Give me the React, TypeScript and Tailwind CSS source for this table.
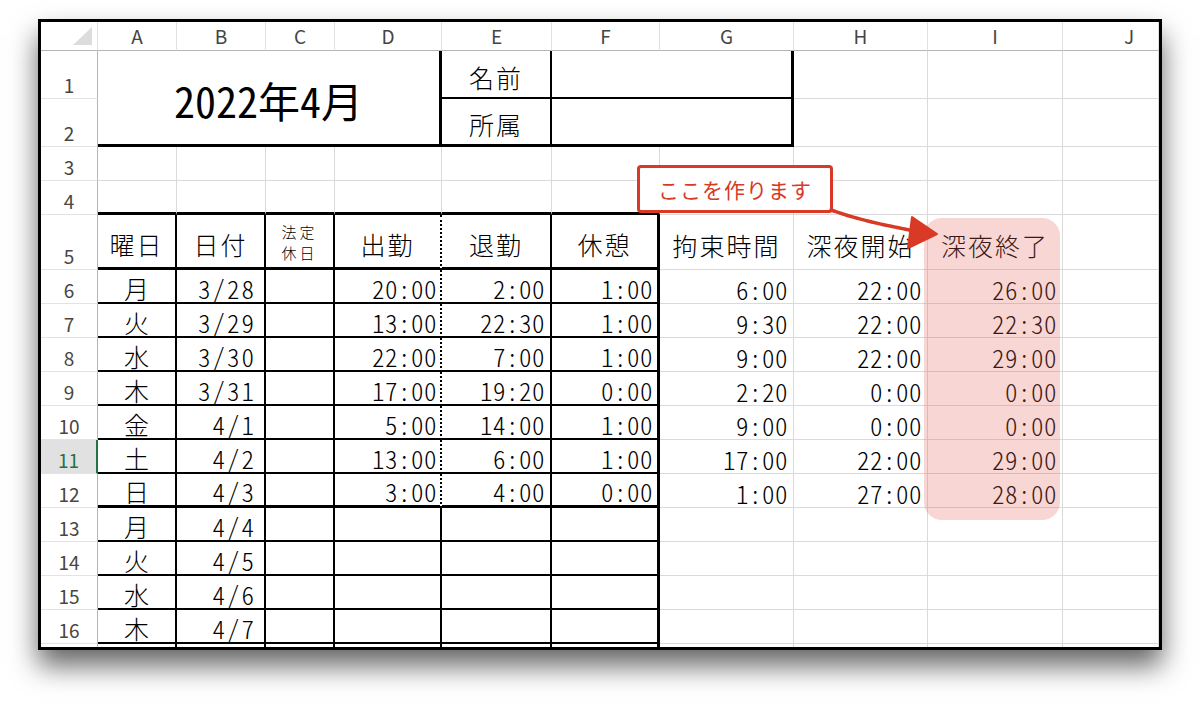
import React from "react";

const DATA: string[][] = [
  ["月", "3/28", "20:00", "2:00", "1:00", "6:00", "22:00", "26:00"],
  ["火", "3/29", "13:00", "22:30", "1:00", "9:30", "22:00", "22:30"],
  ["水", "3/30", "22:00", "7:00", "1:00", "9:00", "22:00", "29:00"],
  ["木", "3/31", "17:00", "19:20", "0:00", "2:20", "0:00", "0:00"],
  ["金", "4/1", "5:00", "14:00", "1:00", "9:00", "0:00", "0:00"],
  ["土", "4/2", "13:00", "6:00", "1:00", "17:00", "22:00", "29:00"],
  ["日", "4/3", "3:00", "4:00", "0:00", "1:00", "27:00", "28:00"],
  ["月", "4/4"],
  ["火", "4/5"],
  ["水", "4/6"],
  ["木", "4/7"],
  ["", ""],
];

const GRAY = "border-r border-b border-[#dadada]";
const COLH =
  "border-r border-b border-r-[#e1e1e1] border-b-[#b5b5b5] flex items-center justify-center text-[19px] leading-none text-[#444] pb-[2px]";
const ROWH =
  "border-r border-b border-r-[#b5b5b5] border-b-[#e3e3e3] flex items-end justify-center pb-[4px] text-[19px] leading-none text-[#4a4540]";
const TXT =
  "flex items-end leading-none pb-[1px] text-[25px] font-light text-black [font-feature-settings:'hwid']";
const HDR =
  "flex items-center justify-center pt-[6px] leading-none text-[25px] font-light tracking-[2px] text-black";

function Row({ i, r }: { i: number; r: string[] }) {
  const n = 6 + i;
  const bottom = i === 6 ? "border-b-[3px]" : "border-b-2";
  const dStyle = i <= 6 ? "[border-right-style:dotted]" : "";
  const v = (k: number) => r[k] ?? "";
  return (
    <>
      <div
        className={
          n === 11
            ? "border-b border-b-[#e3e3e3] border-r-2 border-r-[#217346] bg-[#e1e1e1] flex items-end justify-center pb-[4px] text-[19px] leading-none text-[#217346]"
            : ROWH
        }
      >
        {n < 17 ? n : ""}
      </div>
      <div className={`${TXT} justify-center border-r-2 ${bottom} border-black`}>{r[0]}</div>
      <div className={`${TXT} justify-end pr-[8px] tracking-[2px] border-r-2 ${bottom} border-black`}>{r[1]}</div>
      <div className={`border-r-2 ${bottom} border-black`} />
      <div className={`${TXT} justify-end pr-[3px] tracking-[0.5px] border-r-2 ${dStyle} ${bottom} border-black`}>{v(2)}</div>
      <div className={`${TXT} justify-end pr-[5px] tracking-[0.5px] border-r-2 ${bottom} border-black`}>{v(3)}</div>
      <div className={`${TXT} justify-end pr-[4px] tracking-[0.5px] border-r-[3px] ${bottom} border-black`}>{v(4)}</div>
      <div className={`${TXT} justify-end pr-[5px] tracking-[0.5px] ${GRAY}`}>{v(5)}</div>
      <div className={`${TXT} justify-end pr-[5px] tracking-[0.5px] ${GRAY}`}>{v(6)}</div>
      <div className={`${TXT} justify-end pr-[5px] tracking-[0.5px] ${GRAY}`}>{v(7)}</div>
      <div className={GRAY} />
    </>
  );
}

export default function App() {
  return (
    <div className="w-[1200px] h-[707px] bg-white overflow-hidden font-['Noto_Sans_CJK_JP',sans-serif]">
      <div className="pt-[19px] pl-[38px]">
        <div className="relative w-[1124px] h-[631px] border-[3px] border-black bg-white overflow-hidden shadow-[0_16px_26px_rgba(0,0,0,0.6)]">
          <div className="grid grid-cols-[57px_79px_89px_69px_107px_110px_108px_134px_134px_135px_96px] grid-rows-[29px_48px_48px_34px_34px_55px_repeat(12,34px)]">
            {/* column headers */}
            <div className="border-r border-b border-r-[#e1e1e1] border-b-[#b5b5b5] relative">
              <svg className="absolute left-0 top-0" width="57" height="29">
                <polygon points="32,23 51,5 51,23" fill="#dcdcdc" />
              </svg>
            </div>
            <div className={COLH}>A</div>
            <div className={COLH}>B</div>
            <div className={COLH}>C</div>
            <div className={COLH}>D</div>
            <div className={COLH}>E</div>
            <div className={COLH}>F</div>
            <div className={COLH}>G</div>
            <div className={COLH}>H</div>
            <div className={COLH}>I</div>
            <div className={`${COLH} !justify-start pl-[61px]`}>J</div>

            {/* rows 1-2 */}
            <div className={ROWH}>1</div>
            <div className="col-span-4 row-span-2 border-r-[3px] border-b-[3px] border-black flex items-center justify-center pt-[4px] text-[42px] leading-none text-black [font-feature-settings:'hwid']">
              2022年4月
            </div>
            <div className={`${HDR} border-r-2 border-b-2 border-black`}>名前</div>
            <div className="col-span-2 border-r-[3px] border-b-2 border-black" />
            <div className={GRAY} />
            <div className={GRAY} />
            <div className={GRAY} />

            <div className={ROWH}>2</div>
            <div className={`${HDR} border-r-2 border-b-[3px] border-black`}>所属</div>
            <div className="col-span-2 border-r-[3px] border-b-[3px] border-black" />
            <div className={GRAY} />
            <div className={GRAY} />
            <div className={GRAY} />

            {/* row 3 */}
            <div className={ROWH}>3</div>
            {Array.from({ length: 10 }).map((_, k) => (
              <div key={k} className={GRAY} />
            ))}

            {/* row 4 */}
            <div className={ROWH}>4</div>
            {Array.from({ length: 6 }).map((_, k) => (
              <div key={k} className="border-r border-r-[#dadada] border-b-[3px] border-b-black" />
            ))}
            <div className={GRAY} />
            <div className={GRAY} />
            <div className={GRAY} />
            <div className={GRAY} />

            {/* row 5 */}
            <div className={ROWH}>5</div>
            <div className={`${HDR} border-r-2 border-b-[3px] border-black`}>曜日</div>
            <div className={`${HDR} border-r-2 border-b-[3px] border-black`}>日付</div>
            <div className="border-r-2 border-b-[3px] border-black flex flex-col items-center justify-center pt-[1px] text-[15px] font-light leading-[21px] tracking-[3px] text-black">
              <span>法定</span>
              <span>休日</span>
            </div>
            <div className={`${HDR} border-r-2 [border-right-style:dotted] border-b-[3px] border-black`}>出勤</div>
            <div className={`${HDR} border-r-2 border-b-[3px] border-black`}>退勤</div>
            <div className={`${HDR} border-r-[3px] border-b-[3px] border-black`}>休憩</div>
            <div className={`${HDR} ${GRAY}`}>拘束時間</div>
            <div className={`${HDR} ${GRAY}`}>深夜開始</div>
            <div className={`${HDR} ${GRAY}`}>深夜終了</div>
            <div className={GRAY} />

            {DATA.map((r, i) => (
              <Row key={i} i={i} r={r} />
            ))}
          </div>

          {/* pink highlight */}
          <div className="absolute left-[883px] top-[196px] w-[136px] h-[302px] rounded-[18px] bg-[rgba(226,96,86,0.26)]" />

          {/* callout */}
          <div className="absolute left-[596px] top-[143px] w-[196px] h-[48px] border-[3px] border-[#d83a26] rounded-[4px] bg-white flex items-center justify-center text-[21px] leading-none tracking-[1px] text-[#d83a26]">
            ここを作ります
          </div>

          {/* arrow */}
          <svg className="absolute left-0 top-0 pointer-events-none" width="1118" height="625">
            <path
              d="M 790 188 C 815 197 842 203 874 209"
              stroke="#d83a26"
              strokeWidth="3.5"
              fill="none"
              strokeLinecap="round"
              strokeDasharray="6 1.5"
            />
            <polygon
              points="896,212 871,195 867,226"
              fill="#d83a26"
              stroke="#d83a26"
              strokeWidth="2"
              strokeLinejoin="round"
            />
          </svg>
        </div>
      </div>
    </div>
  );
}
